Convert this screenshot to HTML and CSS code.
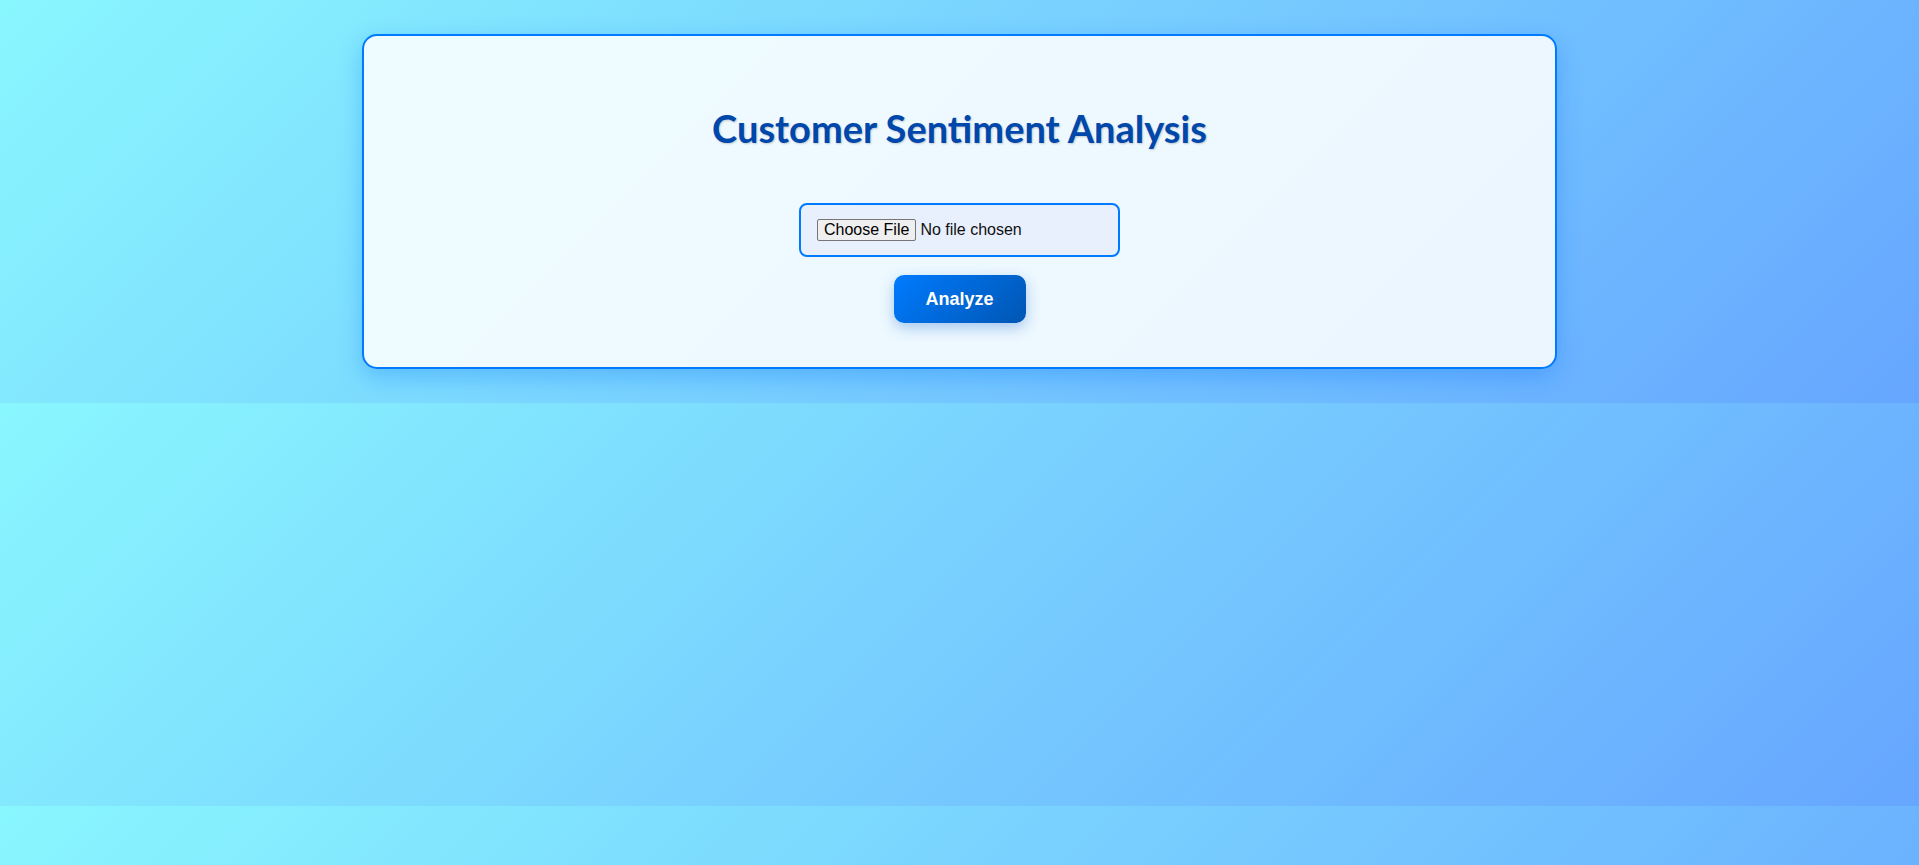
FILE: index.html
```html
<!DOCTYPE html>
<html lang="en">
<head>
<meta charset="utf-8">
<title>Customer Sentiment Analysis</title>
<link rel="stylesheet" href="styles.css">
</head>
<body>
  <main class="card">
    <h1 class="title">Customer Sentiment Analysis</h1>
    <form class="upload-form">
      <div class="file-box">
        <input class="file-input" type="file" name="file">
      </div>
      <button class="analyze-btn" type="button">Analyze</button>
    </form>
  </main>
</body>
</html>
```

FILE: styles.css
```css
body {
  margin: 0;
  padding: 34px 0 34px;
  background: linear-gradient(135deg, #89f7fe 0%, #66a6ff 100%);
  font-family: "Liberation Sans", Arial, sans-serif;
}

.card {
  box-sizing: border-box;
  width: 1195px;
  height: 335px;
  margin: 0 auto;
  padding: 70px 40px 44px;
  background: rgba(255, 255, 255, 0.87);
  border: 2px solid #007bff;
  border-radius: 15px;
  box-shadow: 0 8px 24px rgba(0, 110, 255, 0.3);
  display: flex;
  flex-direction: column;
  align-items: center;
}

.title {
  margin: 0 0 51px;
  height: 46px;
  font-family: Lato, "Open Sans", sans-serif;
  font-weight: 700;
  font-size: 38px;
  line-height: 1.2;
  color: #0047ab;
  text-shadow: 1px 1px 2px rgba(0, 0, 0, 0.2);
}

.upload-form {
  display: flex;
  flex-direction: column;
  align-items: center;
  gap: 18px;
}

.file-box {
  box-sizing: border-box;
  width: 321px;
  height: 54px;
  padding: 0 16px;
  background: #e8f0fe;
  border: 2px solid #007bff;
  border-radius: 8px;
  display: flex;
  align-items: center;
}

.file-input {
  width: 285px;
  font-family: "Liberation Sans", Arial, sans-serif;
  font-size: 16px;
  color: #111;
}

.file-input::file-selector-button {
  font-family: "Liberation Sans", Arial, sans-serif;
  font-size: 16px;
  color: #000;
  background: #efefef;
  border: 1px solid #767676;
  border-radius: 2px;
  padding: 1px 6px;
  margin-right: 4px;
}

.analyze-btn {
  box-sizing: border-box;
  width: 132px;
  height: 48px;
  padding: 0;
  border: none;
  border-radius: 10px;
  background: linear-gradient(135deg, #007bff 0%, #0056b3 100%);
  color: #fff;
  font-family: "Liberation Sans", Arial, sans-serif;
  font-weight: 700;
  font-size: 18px;
  box-shadow: 0 5px 14px rgba(0, 90, 200, 0.3);
  cursor: pointer;
}
```
